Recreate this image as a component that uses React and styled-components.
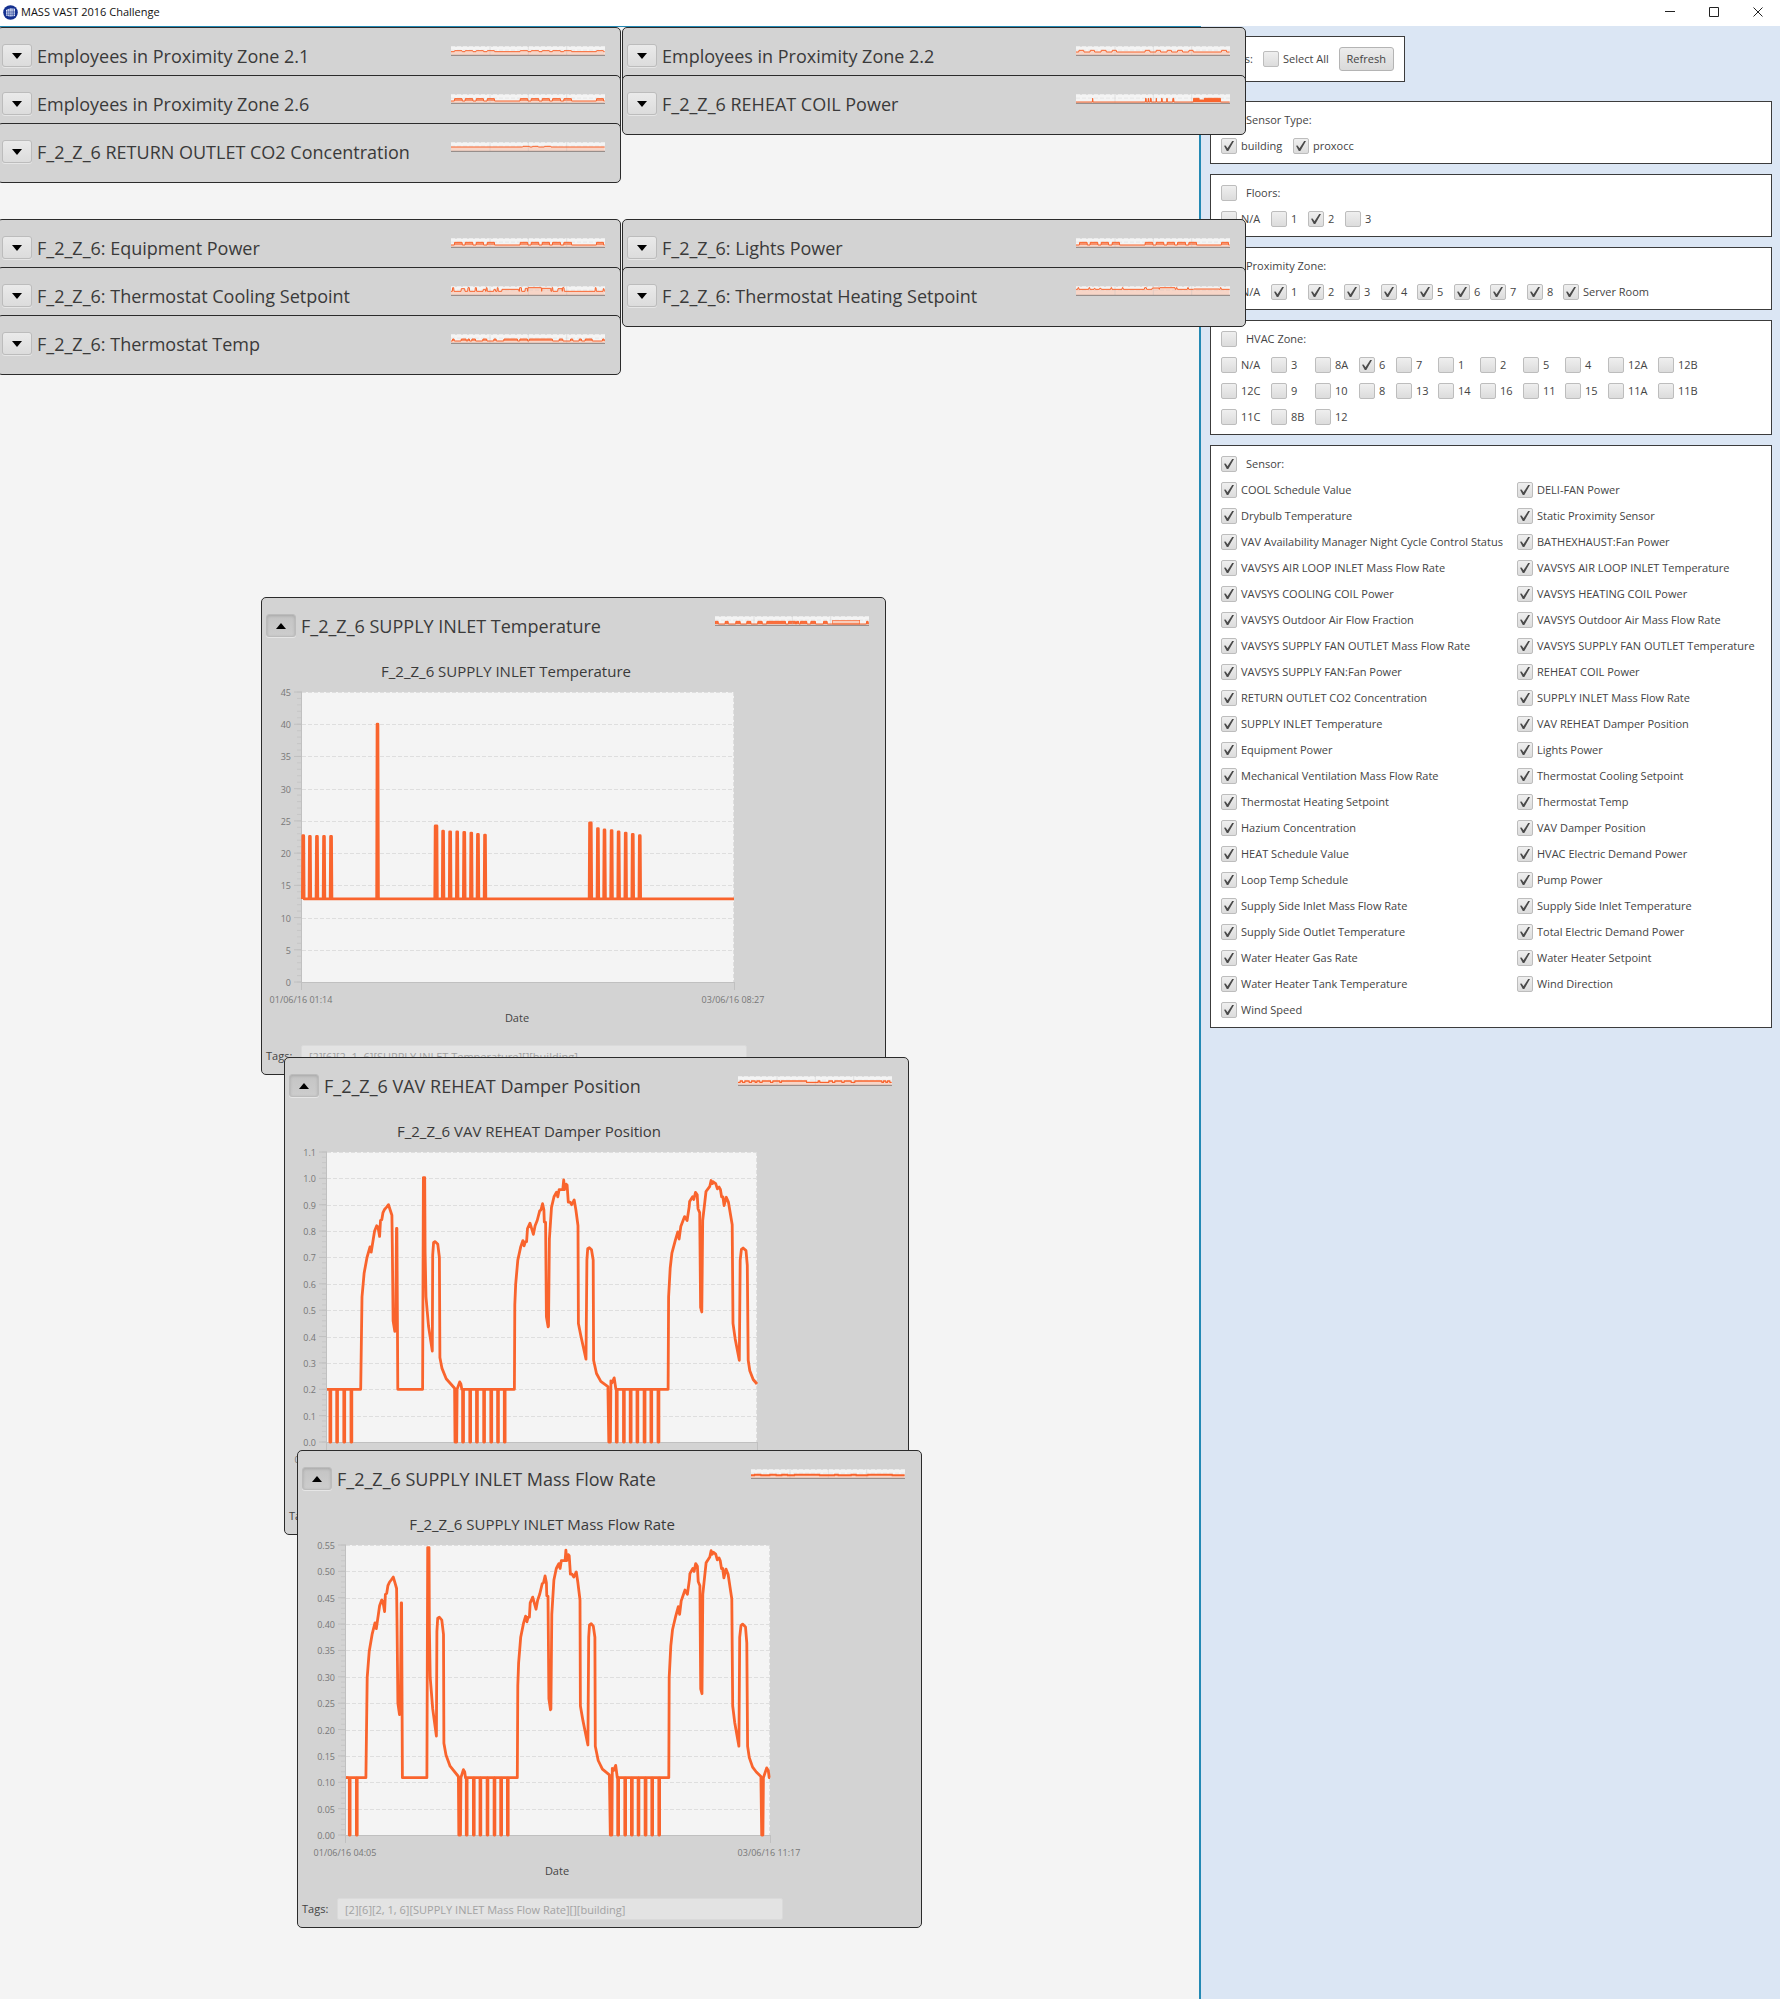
import React from 'react';
import styled, { createGlobalStyle } from 'styled-components';

const ORANGE = '#f9642d';

const GlobalStyle = createGlobalStyle`
  *, *::before, *::after { box-sizing: border-box; }
  body {
    margin: 0;
    background: #f4f4f4;
    color: #444;
    font-family: "Open Sans", "Noto Sans", sans-serif;
    font-size: 11px;
    line-height: 16px;
  }
  button, input { font: inherit; color: inherit; margin: 0; }
`;

/* ---------- window frame ---------- */

const Page = styled.div`
  display: flex;
  flex-direction: column;
  min-height: 100vh;
  overflow: hidden;
`;

const TitleBar = styled.header`
  display: flex;
  align-items: center;
  gap: 3px;
  height: 26px;
  padding: 0 0 2px 3px;
  background: #fff;
  color: #111;
`;

const AppTitle = styled.h1`
  flex: 1;
  margin: 0;
  font-size: 11px;
  font-weight: 400;
  line-height: 16px;
`;

const WindowControls = styled.div`
  display: flex;
`;

const WindowButton = styled.button`
  display: grid;
  place-items: center;
  width: 44px;
  height: 24px;
  padding: 0;
  border: 0;
  background: none;
`;

const Body = styled.div`
  flex: 1;
  display: grid;
  grid-template-columns: minmax(0, 1fr) 579px;
`;

const Workspace = styled.main`
  position: relative;
  z-index: 1;
  min-height: 1940px;
  border-top: 1px solid #2389b4;
  border-right: 2px solid #2389b4;
  background: #f4f4f4;
`;

const Dock = styled.div`
  display: grid;
  grid-template-columns: 624px 624px;
  grid-auto-rows: 48px;
  column-gap: 1px;
  margin-left: -3px;
`;

/* ---------- sensor cards ---------- */

const Card = styled.section`
  border: 1px solid #2b2b2b;
  border-radius: 5px;
  background: #d3d3d3;
`;

const DockedCard = styled(Card)`
  grid-row: ${(p) => p.$row};
  grid-column: ${(p) => p.$col};
  height: 60px;
  padding: 16px 15px 0 4px;
`;

const FloatingCard = styled(Card)`
  position: absolute;
  left: ${(p) => p.$x}px;
  top: ${(p) => p.$y}px;
  width: 625px;
  height: 478px;
  padding: 16px 16px 0 4px;
`;

const CardHeader = styled.div`
  display: flex;
  gap: 5px;
  height: 24px;
`;

const ToggleButton = styled.button`
  display: grid;
  place-items: center;
  width: 30px;
  height: 23px;
  padding: 0;
  border: 1px solid #bcbcbc;
  border-radius: 3px;
  background: ${(p) => (p.$open ? 'linear-gradient(#c4c4c4, #cdcdcd)' : 'linear-gradient(#eaeaea, #dcdcdc)')};
  box-shadow: 0 1px 0 #e6e6e6${(p) => (p.$open ? ', inset 0 1px 3px #a8a8a8' : '')};
`;

const CardTitle = styled.h2`
  flex: 1;
  margin: 0;
  color: #3a3a3a;
  font-size: 18px;
  font-weight: 400;
  line-height: 24px;
  white-space: nowrap;
`;

const SparkBox = styled.div`
  padding-top: 2px;
  line-height: 0;
`;

const Figure = styled.div`
  width: 488px;
  margin: 21px 0 0 -4px;
`;

const ChartTitle = styled.h3`
  margin: 0;
  color: #3a3a3a;
  font-size: 15px;
  font-weight: 400;
  line-height: 24px;
  text-align: center;
`;

const ChartSvg = styled.svg`
  display: block;
  overflow: visible;
  font-size: 9px;
  fill: #777;
`;

const AxisName = styled.text`
  font-size: 11px;
  fill: #444;
`;

const TagRow = styled.div`
  display: flex;
  align-items: center;
  gap: 7px;
  margin-top: 18px;
`;

const TagLabel = styled.label`
  width: 28px;
`;

const TagInput = styled.input`
  width: 446px;
  height: 22px;
  padding: 0 7px;
  border: 1px solid #dadada;
  border-radius: 2px;
  background: #e3e3e3;
  color: #a2a2a2;
`;

/* ---------- filter sidebar ---------- */

const Sidebar = styled.aside`
  display: flex;
  flex-direction: column;
  gap: 10px;
  padding: 10px 8px 10px 9px;
  background: #dbe6f4;
`;

const Toolbar = styled.div`
  align-self: flex-start;
  display: flex;
  align-items: center;
  gap: 10px;
  height: 46px;
  margin-bottom: 9px;
  padding: 0 10px;
  border: 1px solid #3c3c3c;
  background: #fff;
`;

const ToolbarLabel = styled.span`
  width: 32px;
  text-align: right;
`;

const RefreshButton = styled.button`
  width: 55px;
  height: 24px;
  padding: 0;
  border: 1px solid #b4b4b4;
  border-radius: 3px;
  background: linear-gradient(#ececec, #dadada);
`;

const Panel = styled.fieldset`
  min-width: 0;
  margin: 0;
  padding: 5px 10px 4px;
  border: 1px solid #3c3c3c;
  background: #fff;
`;

const Options = styled.div`
  display: grid;
  grid-template-columns: ${(p) => p.$columns};
`;

const CheckLabel = styled.label`
  display: flex;
  align-items: center;
  gap: ${(p) => (p.$head ? 9 : 4)}px;
  height: ${(p) => (p.$inline ? 16 : 26)}px;
  white-space: nowrap;
`;

const CheckBox = styled.input`
  appearance: none;
  display: grid;
  place-items: center;
  flex: none;
  width: 16px;
  height: 16px;
  border: 1px solid #bdbdbd;
  border-radius: 2px;
  background: linear-gradient(#efefef, #dcdcdc);

  &:checked::before {
    content: "";
    width: 10px;
    height: 10px;
    background: #4a4a4a;
    clip-path: polygon(0 48%, 16% 44%, 35% 72%, 82% 0, 100% 0, 43% 100%, 28% 100%);
  }
`;

/* ---------- chart data ---------- */

function dips(xs, level) {
  return xs.flatMap((x) => [[x - 1, level], [x - 1, 0], [x + 1, 0], [x + 1, level]]);
}

function spikes(pairs, level) {
  return pairs.flatMap(([x, v]) => [[x - 2, level], [x - 1, v], [x + 1, v], [x + 2, level]]);
}

const TEMPERATURE_SPIKES = [
  [3, 22.7], [19, 22.6], [36, 22.6], [53, 22.6], [70, 22.6],
  [182, 40],
  [322, 24.2], [324, 24.2], [340, 23.4], [357, 23.3], [374, 23.3], [391, 23.2], [408, 23.1], [424, 22.9], [441, 22.8],
  [694, 24.7], [696, 24.7], [713, 23.8], [729, 23.6], [746, 23.5], [763, 23.3], [780, 23.1], [797, 22.9], [814, 22.7],
];
const TEMPERATURE = [...spikes(TEMPERATURE_SPIKES, 12.9), [1041, 12.9]];

/* Damper opening over two days; the mass flow follows the same curve. */
const DAMPER = [
  [0, 0.2], ...dips([8, 24, 41, 58], 0.2),
  [80, 0.2], [83, 0.55], [88, 0.64], [95, 0.7], [102, 0.74], [105, 0.72], [110, 0.77], [113, 0.8], [118, 0.82],
  [121, 0.815], [125, 0.78], [127, 0.84], [130, 0.843], [133, 0.87], [137, 0.883], [141, 0.89], [146, 0.9],
  [150, 0.88], [154, 0.86], [155, 0.75], [157, 0.46], [161, 0.42], [163, 0.43], [165, 0.81], [166, 0.81], [168, 0.2],
  [227, 0.2], [229, 1.003], [232, 1.003], [233, 0.72], [235, 0.55], [241, 0.44], [250, 0.345], [251, 0.71],
  [253, 0.757], [257, 0.76], [263, 0.75], [267, 0.7], [268, 0.32], [273, 0.279], [283, 0.24], [303, 0.204],
  [304, 0], [308, 0], [309, 0.2], [315, 0.228], [318, 0.22], [320, 0.2],
  ...dips([323, 340, 356, 373, 390, 406, 422], 0.2),
  [445, 0.2], [446, 0.52], [448, 0.6], [453, 0.69], [460, 0.74], [465, 0.764], [468, 0.744], [471, 0.76], [474, 0.76],
  [476, 0.81], [482, 0.83], [490, 0.788], [494, 0.82], [499, 0.84], [505, 0.877], [508, 0.88], [512, 0.904],
  [515, 0.88], [516, 0.835], [519, 0.833], [521, 0.475], [525, 0.437], [526, 0.44], [528, 0.77], [533, 0.89],
  [539, 0.93], [545, 0.947], [548, 0.93], [551, 0.957], [560, 0.957], [562, 0.994], [564, 0.957], [568, 0.978],
  [570, 0.975], [573, 0.91], [577, 0.91], [581, 0.9], [587, 0.918], [591, 0.88], [596, 0.82], [597, 0.45],
  [603, 0.4], [615, 0.314], [617, 0.69], [619, 0.733], [623, 0.737], [628, 0.729], [632, 0.69], [633, 0.31],
  [640, 0.26], [650, 0.23], [667, 0.21], [669, 0], [673, 0], [674, 0.232], [677, 0.225], [682, 0.243], [686, 0.2],
  ...dips([688, 705, 721, 737, 754, 770, 787], 0.2),
  [810, 0.2], [811, 0.55], [815, 0.66], [819, 0.716], [827, 0.765], [833, 0.797], [836, 0.77], [840, 0.817],
  [849, 0.855], [855, 0.84], [860, 0.893], [861, 0.912], [868, 0.93], [871, 0.92], [875, 0.947], [879, 0.938],
  [881, 0.885], [885, 0.87], [887, 0.51], [890, 0.493], [892, 0.84], [897, 0.91], [900, 0.95], [909, 0.97],
  [912, 0.992], [915, 0.98], [917, 0.987], [923, 0.98], [927, 0.96], [931, 0.967], [934, 0.958], [937, 0.93],
  [940, 0.93], [943, 0.897], [948, 0.928], [953, 0.91], [962, 0.824], [964, 0.45], [969, 0.393], [979, 0.31],
  [981, 0.69], [984, 0.731], [988, 0.736], [995, 0.726], [998, 0.67], [1000, 0.31], [1004, 0.27], [1012, 0.237],
  [1021, 0.22], [1032, 0.204], [1034, 0], [1037, 0], [1038, 0.2], [1046, 0.234], [1050, 0.225], [1052, 0.2], [1054, 0.2],
];
const MASS_FLOW = DAMPER.filter(([x]) => x >= 39).map(([x, v]) => [x - 32, v * 0.5435]);
MASS_FLOW.unshift([0, 0.109]);

const FLOATING = [
  {
    id: 'temperature', title: 'F_2_Z_6 SUPPLY INLET Temperature', x: 261, y: 570, from: '01/06/16 01:14', to: '03/06/16 08:27',
    tags: '[2][6][2, 1, 6][SUPPLY INLET Temperature][][building]',
    plotLeft: 40, span: 1041, max: 45, step: 5, digits: 0, minor: 5, points: TEMPERATURE, spark: 'supply',
  },
  {
    id: 'damper', title: 'F_2_Z_6 VAV REHEAT Damper Position', x: 284, y: 1030, from: '01/06/16 02:39', to: '03/06/16 09:52',
    tags: '[2][6][2, 1, 6][VAV REHEAT Damper Position][][building]',
    plotLeft: 42, span: 1021, max: 1.1, step: 0.1, digits: 1, minor: 5, points: DAMPER.filter(([x]) => x <= 1021), spark: 'damper',
  },
  {
    id: 'flow', title: 'F_2_Z_6 SUPPLY INLET Mass Flow Rate', x: 297, y: 1423, from: '01/06/16 04:05', to: '03/06/16 11:17',
    tags: '[2][6][2, 1, 6][SUPPLY INLET Mass Flow Rate][][building]',
    plotLeft: 48, span: 1022, max: 0.55, step: 0.05, digits: 2, minor: 5, points: MASS_FLOW, spark: 'flow',
  },
];

const DOCKED = [
  { title: 'Employees in Proximity Zone 2.1', row: 1, col: 1, spark: 'zone1' },
  { title: 'Employees in Proximity Zone 2.2', row: 1, col: 2, spark: 'zone2' },
  { title: 'Employees in Proximity Zone 2.6', row: 2, col: 1, spark: 'busy' },
  { title: 'F_2_Z_6 REHEAT COIL Power', row: 2, col: 2, spark: 'coil' },
  { title: 'F_2_Z_6 RETURN OUTLET CO2 Concentration', row: 3, col: 1, spark: 'co2' },
  { title: 'F_2_Z_6: Equipment Power', row: 5, col: 1, spark: 'equipment' },
  { title: 'F_2_Z_6: Lights Power', row: 5, col: 2, spark: 'equipment' },
  { title: 'F_2_Z_6: Thermostat Cooling Setpoint', row: 6, col: 1, spark: 'cooling' },
  { title: 'F_2_Z_6: Thermostat Heating Setpoint', row: 6, col: 2, spark: 'heating' },
  { title: 'F_2_Z_6: Thermostat Temp', row: 7, col: 1, spark: 'thermostat' },
];

/* Sparklines: a level with raised runs, in a 462 x 30 box. A run may carry its own height. */
const SHIFTS = [[10, 34], [42, 66], [75, 98], [108, 131], [207, 231], [240, 264], [273, 296], [304, 329], [338, 362], [436, 458]];
const SHORT_SHIFTS = [[8, 24], [42, 56], [75, 91], [108, 122], [207, 222], [240, 254], [273, 287], [304, 320], [338, 352], [436, 452]];
const SPARKS = {
  zone1: { level: 17, top: 14, runs: SHIFTS, width: 3 },
  zone2: { level: 18, top: 13, runs: SHORT_SHIFTS, width: 3 },
  busy: { level: 21, top: 14, runs: SHIFTS, width: 3, solid: 0.6 },
  equipment: { level: 21, top: 13, runs: SHIFTS, width: 3, solid: 0.6 },
  co2: { level: 15, top: 13, runs: [[215, 236], [244, 262], [280, 300]], width: 3 },
  coil: {
    level: 24, top: 13, width: 3, solid: 1,
    runs: [[49, 51], [208, 211], [216, 218], [222, 226], [240, 242], [256, 259], [272, 274], [290, 294], [352, 370], [370, 384, 18], [384, 434]],
  },
  cooling: {
    level: 16, top: 5, width: 3,
    runs: [[4, 9], [30, 42, 8], [50, 56], [72, 77], [96, 104, 10], [105, 109], [128, 134, 10], [138, 142], [152, 204, 10], [205, 212], [222, 230, 7], [230, 272, 5], [272, 300, 7], [302, 306], [320, 334, 8], [334, 340], [432, 436], [456, 460, 8]],
  },
  heating: {
    level: 10, top: 5, width: 3,
    runs: [[5, 9], [38, 42], [54, 58, 7], [70, 76, 7], [104, 108], [138, 142], [205, 212], [228, 250, 6], [250, 298, 5], [300, 304], [334, 338], [352, 430, 9], [432, 436]],
  },
  thermostat: {
    level: 21, top: 15, width: 3, solid: 0.6,
    runs: [[4, 10], [30, 46], [50, 56], [62, 74], [95, 108], [128, 136], [158, 200], [206, 230], [234, 305], [324, 336], [358, 366], [384, 392], [402, 424], [454, 460]],
  },
  supply: {
    level: 24, top: 16, width: 3, solid: 0.9, open: [353, 434],
    runs: [[0, 10], [30, 40], [62, 76], [95, 108], [128, 142], [155, 212], [220, 242], [244, 252], [256, 276], [287, 302], [325, 337], [454, 460]],
  },
  damper: {
    level: 19, top: 15, width: 4,
    runs: [[6, 14], [20, 34], [40, 52], [56, 66], [72, 98], [104, 126], [130, 206], [240, 246], [272, 284], [290, 312], [318, 340], [350, 432], [436, 444], [448, 456]],
  },
  flow: {
    level: 19, top: 17, width: 6,
    runs: [[10, 30], [56, 76], [92, 110], [130, 206], [250, 262], [300, 316], [350, 424]],
  },
};

const HVAC_ZONES = [
  'N/A', '3', '8A', '6', '7', '1', '2', '5', '4', '12A', '12B',
  '12C', '9', '10', '8', '13', '14', '16', '11', '15', '11A', '11B',
  '11C', '8B', '12',
];

const SENSORS = [
  'COOL Schedule Value', 'DELI-FAN Power',
  'Drybulb Temperature', 'Static Proximity Sensor',
  'VAV Availability Manager Night Cycle Control Status', 'BATHEXHAUST:Fan Power',
  'VAVSYS AIR LOOP INLET Mass Flow Rate', 'VAVSYS AIR LOOP INLET Temperature',
  'VAVSYS COOLING COIL Power', 'VAVSYS HEATING COIL Power',
  'VAVSYS Outdoor Air Flow Fraction', 'VAVSYS Outdoor Air Mass Flow Rate',
  'VAVSYS SUPPLY FAN OUTLET Mass Flow Rate', 'VAVSYS SUPPLY FAN OUTLET Temperature',
  'VAVSYS SUPPLY FAN:Fan Power', 'REHEAT COIL Power',
  'RETURN OUTLET CO2 Concentration', 'SUPPLY INLET Mass Flow Rate',
  'SUPPLY INLET Temperature', 'VAV REHEAT Damper Position',
  'Equipment Power', 'Lights Power',
  'Mechanical Ventilation Mass Flow Rate', 'Thermostat Cooling Setpoint',
  'Thermostat Heating Setpoint', 'Thermostat Temp',
  'Hazium Concentration', 'VAV Damper Position',
  'HEAT Schedule Value', 'HVAC Electric Demand Power',
  'Loop Temp Schedule', 'Pump Power',
  'Supply Side Inlet Mass Flow Rate', 'Supply Side Inlet Temperature',
  'Supply Side Outlet Temperature', 'Total Electric Demand Power',
  'Water Heater Gas Rate', 'Water Heater Setpoint',
  'Water Heater Tank Temperature', 'Wind Direction',
  'Wind Speed',
];

const PANELS = [
  { title: 'Sensor Type:', all: true, columns: '72px 1fr', items: ['building', 'proxocc'], checked: () => true },
  { title: 'Floors:', all: false, columns: '50px 37px 37px 1fr', items: ['N/A', '1', '2', '3'], checked: (v) => v === '2' },
  {
    title: 'Proximity Zone:', all: false, columns: '50px repeat(4, 37px 36px) 1fr',
    items: ['N/A', '1', '2', '3', '4', '5', '6', '7', '8', 'Server Room'], checked: (v) => v !== 'N/A',
  },
  {
    title: 'HVAC Zone:', all: false, columns: '50px 44px 44px 37px 42px 42px 43px 42px 43px 50px 1fr',
    items: HVAC_ZONES, checked: (v) => v === '6',
  },
  { title: 'Sensor:', all: true, columns: '296px 1fr', items: SENSORS, checked: () => true },
];

/* ---------- components ---------- */

function Logo() {
  return (
    <svg width="15" height="15" viewBox="0 0 15 15" aria-hidden="true">
      <circle cx="7.5" cy="7.5" r="7.3" fill="#14308f" />
      <path d="M3 5 L6.6 3.4 V11.4 L3 10.6 Z M7.2 3.2 L12 3.8 V11 L7.2 11.6 Z" fill="#e8eefc" />
      <path d="M3 7 H12 M3 9.2 H12 M4.8 4.4 V11 M9 3.4 V11.4 M10.6 3.6 V11.2" stroke="#14308f" strokeWidth="0.6" />
    </svg>
  );
}

function WindowButtons() {
  return (
    <WindowControls>
      <WindowButton type="button" aria-label="Minimize">
        <svg width="10" height="10" aria-hidden="true"><path d="M0 4.5 H10" stroke="#222" /></svg>
      </WindowButton>
      <WindowButton type="button" aria-label="Maximize">
        <svg width="10" height="10" aria-hidden="true"><path d="M0.5 0.5 H9.5 V9.5 H0.5 Z" stroke="#222" fill="none" /></svg>
      </WindowButton>
      <WindowButton type="button" aria-label="Close">
        <svg width="10" height="10" aria-hidden="true"><path d="M0.5 0.5 L9.5 9.5 M9.5 0.5 L0.5 9.5" stroke="#222" /></svg>
      </WindowButton>
    </WindowControls>
  );
}

function Spark({ kind }) {
  const { level, top, runs, width, solid, open } = SPARKS[kind];
  const line = [
    [0, level],
    ...runs.flatMap(([a, b, y = top]) => [[a, level], [a + 1, y], [b - 1, y], [b, level]]),
    [461, level],
  ].map((p) => p.join(' ')).join(' L');
  return (
    <svg width="154" height="10" viewBox="0 0 462 30" aria-hidden="true">
      <rect y="2" width="462" height="26" fill="#f4f4f4" />
      <path d="M0 1.5 H462" stroke="#ececec" strokeWidth="3" strokeDasharray="12 6" />
      <path d={`M${line} V27 H0 Z`} fill="#f8cdbb" fillOpacity="0.8" />
      <path d="M0 12.5 H462" stroke="#b8b8b8" strokeOpacity="0.3" strokeWidth="2" strokeDasharray="12 6" />
      {open && <rect x={open[0]} y={top - 3} width={open[1] - open[0]} height={27 - top} fill="#f8cdbb" stroke={ORANGE} strokeWidth="2" />}
      {solid && runs.map(([a, b, y = top]) => (
        <rect key={a} x={a} y={y} width={b - a} height={level - y} fill={ORANGE} fillOpacity={solid} />
      ))}
      <path d="M117 1 V27 M232 1 V27 M347 1 V27" stroke="#bbb" strokeOpacity="0.5" strokeWidth="2" />
      <path d={`M${line}`} fill="none" stroke={ORANGE} strokeWidth={width} />
      <path d="M0 28 H462" stroke="#8a7f7b" strokeWidth="3" />
    </svg>
  );
}

function LineChart({ chart }) {
  const { plotLeft, span, max, step, digits, minor, points, from, to } = chart;
  const top = 9;
  const height = 290;
  const right = 472;
  const bottom = top + height;
  const width = right - plotLeft;
  const count = Math.round(max / step);
  const yAt = (v) => bottom - (v / max) * height;
  const d = points.map(([x, v]) => `${(plotLeft + (x / span) * width).toFixed(1)} ${yAt(v).toFixed(1)}`).join(' L');
  const majors = Array.from({ length: count + 1 }, (_, i) => i);
  const minors = Array.from({ length: count * minor + 1 }, (_, i) => i);
  return (
    <ChartSvg width="488" height="344" role="img" aria-label={chart.title}>
      <rect x={plotLeft} y={top} width={width} height={height} fill="#f4f4f4" />
      {majors.slice(1).map((i) => (
        <path key={i} d={`M${plotLeft} ${Math.round(yAt(i * step)) + 0.5} H${right}`} stroke="#dedede" strokeDasharray="4 2" />
      ))}
      <path d={`M${right - 0.5} ${top} V${bottom}`} stroke="#dedede" strokeDasharray="4 2" />
      {minors.map((i) => (
        <path key={i} d={`M${plotLeft - 5} ${yAt((i * step) / minor)} H${plotLeft}`} stroke="#c4c4c4" strokeWidth="0.8" />
      ))}
      {majors.map((i) => (
        <g key={i}>
          <path d={`M${plotLeft - 8} ${yAt(i * step)} H${plotLeft}`} stroke="#c0c0c0" />
          <text x={plotLeft - 11} y={yAt(i * step) + 4} textAnchor="end">{(i * step).toFixed(digits)}</text>
        </g>
      ))}
      <path d={`M${plotLeft - 0.5} ${top} V${bottom + 8} M${plotLeft} ${bottom + 0.5} H${right} M${right + 0.5} ${bottom} V${bottom + 8}`} stroke="#c0c0c0" fill="none" />
      <path d={`M${d}`} fill="none" stroke={ORANGE} strokeWidth="2.8" strokeLinejoin="round" />
      <text x={plotLeft - 1} y="320" textAnchor="middle">{from}</text>
      <text x={right - 1} y="320" textAnchor="middle">{to}</text>
      <AxisName x={(plotLeft + right) / 2 - 1} y="339" textAnchor="middle">Date</AxisName>
    </ChartSvg>
  );
}

function Header({ title, spark, open }) {
  return (
    <CardHeader>
      <ToggleButton $open={open} type="button" aria-expanded={Boolean(open)} aria-label={`Toggle ${title}`}>
        <svg width="10" height="6" viewBox="0 0 10 6" aria-hidden="true">
          <path d={open ? 'M0 6 L5 0 L10 6 Z' : 'M0 0 L5 6 L10 0 Z'} fill="#000" />
        </svg>
      </ToggleButton>
      <CardTitle>{title}</CardTitle>
      <SparkBox><Spark kind={spark} /></SparkBox>
    </CardHeader>
  );
}

function Check({ label, checked, head, inline }) {
  return (
    <CheckLabel $head={head} $inline={inline}>
      <CheckBox type="checkbox" defaultChecked={checked} />
      {label}
    </CheckLabel>
  );
}

export default function App() {
  return (
    <Page>
      <GlobalStyle />
      <TitleBar>
        <Logo />
        <AppTitle>MASS VAST 2016 Challenge</AppTitle>
        <WindowButtons />
      </TitleBar>
      <Body>
        <Workspace>
          <Dock>
            {DOCKED.map((card) => (
              <DockedCard key={card.title} $row={card.row} $col={card.col}>
                <Header title={card.title} spark={card.spark} />
              </DockedCard>
            ))}
          </Dock>
          {FLOATING.map((card) => (
            <FloatingCard key={card.id} $x={card.x} $y={card.y}>
              <Header title={card.title} spark={card.spark} open />
              <Figure>
                <ChartTitle>{card.title}</ChartTitle>
                <LineChart chart={card} />
              </Figure>
              <TagRow>
                <TagLabel htmlFor={`tags-${card.id}`}>Tags:</TagLabel>
                <TagInput id={`tags-${card.id}`} defaultValue={card.tags} disabled />
              </TagRow>
            </FloatingCard>
          ))}
        </Workspace>
        <Sidebar>
          <Toolbar>
            <ToolbarLabel>Tools:</ToolbarLabel>
            <Check label="Select All" inline />
            <RefreshButton type="button">Refresh</RefreshButton>
          </Toolbar>
          {PANELS.map((panel) => (
            <Panel key={panel.title} aria-label={panel.title}>
              <Check label={panel.title} checked={panel.all} head />
              <Options $columns={panel.columns}>
                {panel.items.map((item) => (
                  <Check key={item} label={item} checked={panel.checked(item)} />
                ))}
              </Options>
            </Panel>
          ))}
        </Sidebar>
      </Body>
    </Page>
  );
}
